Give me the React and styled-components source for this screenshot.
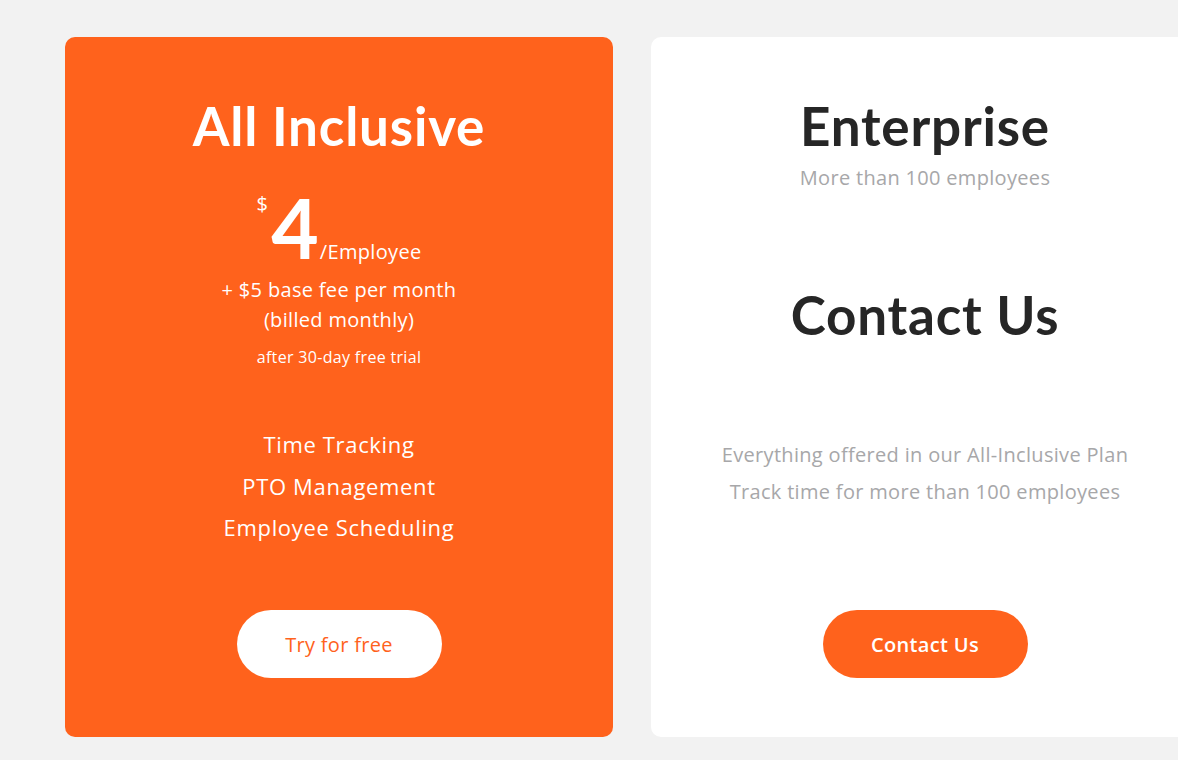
import React from 'react';
import styled, { createGlobalStyle } from 'styled-components';

const GlobalStyle = createGlobalStyle`
  html, body {
    margin: 0;
    padding: 0;
    background: #f2f2f2;
  }
  body {
    font-family: "Open Sans", "Liberation Sans", sans-serif;
    letter-spacing: 0.02em;
  }
`;

const ORANGE = '#ff621c';
const HEADING = 'Lato, "Open Sans", sans-serif';

const Page = styled.div`
  display: flex;
  gap: 38px;
  padding: 37px 0 23px 65px;
  width: 1178px;
  box-sizing: border-box;
  overflow: hidden;
`;

const Card = styled.div`
  flex: 0 0 548px;
  height: 700px;
  box-sizing: border-box;
  border-radius: 10px;
  background: ${(p) => (p.$accent ? ORANGE : '#ffffff')};
  color: ${(p) => (p.$accent ? '#ffffff' : '#262626')};
  display: flex;
  flex-direction: column;
  align-items: center;
  text-align: center;
  padding: 58px 20px 59px;
`;

const Title = styled.h2`
  margin: 0;
  font-family: ${HEADING};
  font-size: 53px;
  line-height: 62px;
  font-weight: 700;
  letter-spacing: 0.8px;
`;

const Subtitle = styled.div`
  margin-top: 8px;
  font-size: 20px;
  line-height: 26px;
  color: #a7a7a9;
`;

const PriceRow = styled.div`
  display: flex;
  align-items: baseline;
  margin-top: 30px;
  height: 80px;
`;

const Currency = styled.span`
  align-self: flex-start;
  font-size: 20px;
  line-height: 20px;
  margin-top: 7px;
  margin-right: 3px;
`;

const Amount = styled.span`
  font-family: ${HEADING};
  font-size: 82px;
  line-height: 80px;
  font-weight: 700;
  letter-spacing: 0;
`;

const Per = styled.span`
  font-size: 20px;
  margin-left: 1px;
`;

const Fee = styled.div`
  font-size: 20px;
  line-height: 30px;
  margin-top: ${(p) => p.$gap || 0}px;
`;

const Trial = styled.div`
  font-size: 16px;
  line-height: 20px;
  margin-top: 12px;
  font-weight: 500;
`;

const Features = styled.ul`
  list-style: none;
  margin: 57px 0 0;
  padding: 0;
`;

const Feature = styled.li`
  font-size: 22px;
  line-height: 41.5px;
  letter-spacing: 0.03em;
`;

const BigText = styled.div`
  font-family: ${HEADING};
  font-size: 53px;
  line-height: 62px;
  font-weight: 700;
  letter-spacing: 0.8px;
  margin-top: 93px;
`;

const Notes = styled.div`
  margin-top: 90px;
  color: #a7a7a9;
  font-size: 20px;
  line-height: 37px;
`;

const Button = styled.button`
  margin-top: auto;
  width: 205px;
  height: 68px;
  border: none;
  border-radius: 34px;
  font-family: inherit;
  letter-spacing: inherit;
  font-size: 20px;
  cursor: pointer;
  background: ${(p) => (p.$light ? '#ffffff' : ORANGE)};
  color: ${(p) => (p.$light ? ORANGE : '#ffffff')};
  font-weight: ${(p) => (p.$light ? 400 : 600)};
`;

export default function App() {
  return (
    <>
      <GlobalStyle />
      <Page>
        <Card $accent>
          <Title>All Inclusive</Title>
          <PriceRow>
            <Currency>$</Currency>
            <Amount>4</Amount>
            <Per>/Employee</Per>
          </PriceRow>
          <Fee $gap={8}>+ $5 base fee per month</Fee>
          <Fee>(billed monthly)</Fee>
          <Trial>after 30-day free trial</Trial>
          <Features>
            <Feature>Time Tracking</Feature>
            <Feature>PTO Management</Feature>
            <Feature>Employee Scheduling</Feature>
          </Features>
          <Button $light>Try for free</Button>
        </Card>
        <Card>
          <Title>Enterprise</Title>
          <Subtitle>More than 100 employees</Subtitle>
          <BigText>Contact Us</BigText>
          <Notes>
            <div>Everything offered in our All-Inclusive Plan</div>
            <div>Track time for more than 100 employees</div>
          </Notes>
          <Button>Contact Us</Button>
        </Card>
      </Page>
    </>
  );
}
